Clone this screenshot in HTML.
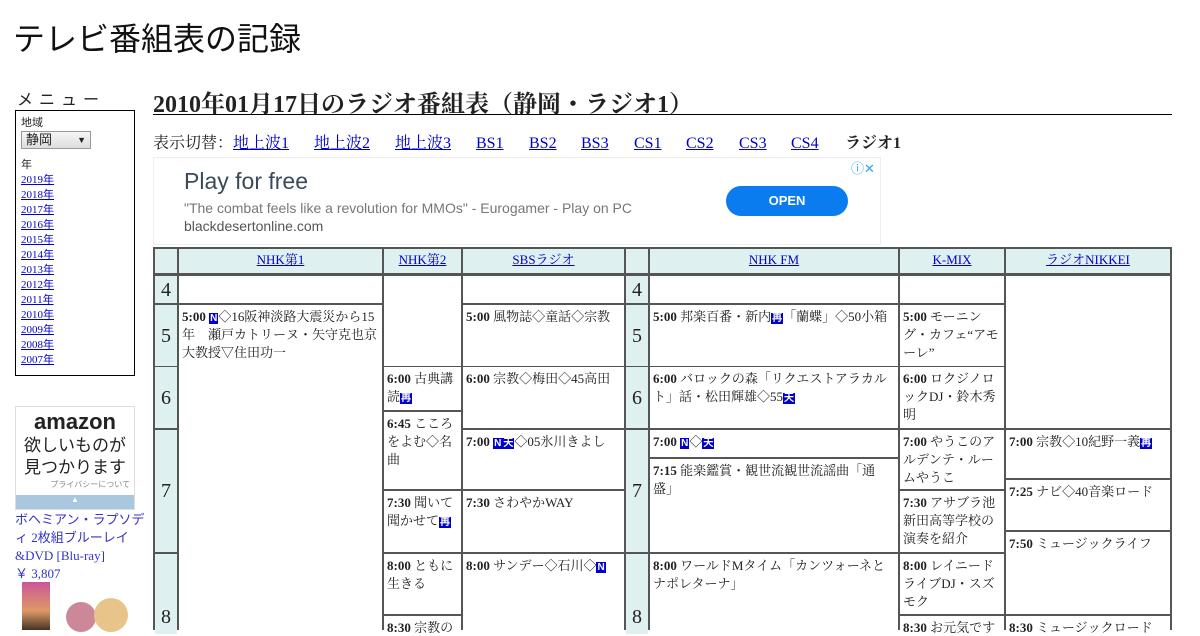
<!DOCTYPE html>
<html><head><meta charset="utf-8"><style>
*{margin:0;padding:0;box-sizing:border-box}
body{width:1200px;height:630px;overflow:hidden;background:#fff;font-family:"Liberation Serif","Noto Serif CJK SC",serif;color:#222;position:relative}
.a{position:absolute}
a{color:#00c;text-decoration:underline}
.c{position:absolute;background:#fff;font-size:13px;line-height:18px;padding:3px 3px;overflow:hidden}
.h{background:#dff0f0;text-align:center;font-size:13px;line-height:22px;padding:0}
.t{background:#dff0f0;font-size:20px;display:flex;align-items:center;justify-content:center;padding:0}
b{font-weight:bold}
.i{display:inline-block;background:#00c;color:#fff;font-size:10px;line-height:11px;padding:0 1px;font-family:"Liberation Sans",sans-serif;font-weight:bold}
.n{position:absolute;top:134px;font-size:16px;line-height:20px;height:20px;white-space:nowrap;display:block}
#tb{position:absolute;left:-1px;top:0;width:1200px;height:630px}
</style></head><body>
<div class="a" style="left:13px;top:14px;font-size:32px;font-family:'Liberation Sans','Noto Sans CJK JP',sans-serif;color:#111">テレビ番組表の記録</div>
<div class="a" style="left:17px;top:86px;font-size:16px;letter-spacing:6px;font-family:'Liberation Sans','Noto Sans CJK JP',sans-serif">メニュー</div>
<div class="a" style="left:15px;top:110px;width:120px;height:266px;border:1px solid #000;padding:5px;font-size:11px;line-height:15px;font-family:'Liberation Sans','Noto Sans CJK JP',sans-serif">
<div>地域</div>
<div style="width:70px;height:18px;border:1px solid #999;background:linear-gradient(#f6f6f6,#ddd);font-size:13px;line-height:16px;padding-left:4px;position:relative">静岡<span style="position:absolute;right:4px;font-size:9px">▼</span></div>
<div style="margin-top:9px">年</div>
<div style="font-family:'Liberation Serif',serif"><a>2019年</a><br><a>2018年</a><br><a>2017年</a><br><a>2016年</a><br><a>2015年</a><br><a>2014年</a><br><a>2013年</a><br><a>2012年</a><br><a>2011年</a><br><a>2010年</a><br><a>2009年</a><br><a>2008年</a><br><a>2007年</a></div>
</div>
<div class="a" style="left:15px;top:406px;width:120px;height:104px;border:1px solid #ddd;text-align:center;font-family:'Liberation Sans','Noto Sans CJK JP',sans-serif">
<div style="font-size:22px;font-weight:bold;line-height:22px;margin-top:4px">amazon</div>
<div style="font-size:17px;line-height:22px;margin-top:2px">欲しいものが<br>見つかります</div>
<div style="font-size:8px;text-align:right;color:#888;padding-right:4px">プライバシーについて</div>
<div style="position:absolute;left:0;right:0;bottom:0;height:14px;background:#a9c8df;color:#fff;font-size:8px">▲</div>
</div>
<div class="a" style="left:15px;top:511px;width:130px;white-space:nowrap;font-size:13px;line-height:18px;color:#33c;font-family:'Liberation Serif','Noto Sans CJK JP',serif">ボヘミアン・ラプソデ<br>ィ 2枚組ブルーレイ<br>&amp;DVD [Blu-ray]<br>￥ 3,807</div>
<div class="a" style="left:22px;top:582px;width:28px;height:48px;background:linear-gradient(#c59,#d96 60%,#432)"></div>
<div class="a" style="left:66px;top:602px;width:30px;height:30px;border-radius:50%;background:#c89"></div>
<div class="a" style="left:94px;top:598px;width:34px;height:34px;border-radius:50%;background:#e7c48a"></div>

<div class="a" style="left:153px;top:84px;width:1019px;height:31px;border-bottom:1px solid #000;font-size:24px;font-weight:bold">2010年01月17日のラジオ番組表（静岡・ラジオ1）</div>
<span class="n" style="left:153px">表示切替：</span>
<a class="n" style="left:233px">地上波1</a>
<a class="n" style="left:314px">地上波2</a>
<a class="n" style="left:395px">地上波3</a>
<a class="n" style="left:476px">BS1</a>
<a class="n" style="left:529px">BS2</a>
<a class="n" style="left:581px">BS3</a>
<a class="n" style="left:634px">CS1</a>
<a class="n" style="left:686px">CS2</a>
<a class="n" style="left:739px">CS3</a>
<a class="n" style="left:791px">CS4</a>
<b class="n" style="left:845px">ラジオ1</b>
<div class="a" style="left:153px;top:157px;width:728px;height:88px;border:1px solid #eee;font-family:'Liberation Sans',sans-serif">
<div class="a" style="left:30px;top:10px;font-size:23px;color:#3a4a5a">Play for free</div>
<div class="a" style="left:30px;top:42px;font-size:14px;color:#777">"The combat feels like a revolution for MMOs" - Eurogamer - Play on PC</div>
<div class="a" style="left:30px;top:60px;font-size:14px;color:#555">blackdesertonline.com</div>
<div class="a" style="left:572px;top:28px;width:122px;height:30px;border-radius:15px;background:#0a7cf0;color:#fff;font-size:13px;font-weight:bold;text-align:center;line-height:30px">OPEN</div>
<div class="a" style="left:697px;top:0;font-size:13px;color:#2aa8e0">ⓘ✕</div>
</div>

<div id="tb">
<div class="a" style="left:154px;top:247px;width:1019px;height:383px;background:#555"></div>
<div class="c h" style="left:156px;top:249px;width:22px;height:24px"></div>
<div class="c h" style="left:180px;top:249px;width:203px;height:24px"><a>NHK第1</a></div>
<div class="c h" style="left:385px;top:249px;width:77px;height:24px"><a>NHK第2</a></div>
<div class="c h" style="left:464px;top:249px;width:161px;height:24px"><a>SBSラジオ</a></div>
<div class="c h" style="left:627px;top:249px;width:22px;height:24px"></div>
<div class="c h" style="left:651px;top:249px;width:248px;height:24px"><a>NHK FM</a></div>
<div class="c h" style="left:901px;top:249px;width:104px;height:24px"><a>K-MIX</a></div>
<div class="c h" style="left:1007px;top:249px;width:164px;height:24px"><a>ラジオNIKKEI</a></div>

<div class="c t" style="left:156px;top:276px;width:22px;height:27px">4</div>
<div class="c t" style="left:156px;top:305px;width:22px;height:61px">5</div>
<div class="c t" style="left:156px;top:367px;width:22px;height:61px">6</div>
<div class="c t" style="left:156px;top:430px;width:22px;height:122px">7</div>
<div class="c t" style="left:156px;top:554px;width:22px;height:80px;align-items:flex-end;padding-bottom:8px">8</div>
<div class="c t" style="left:627px;top:276px;width:22px;height:27px">4</div>
<div class="c t" style="left:627px;top:305px;width:22px;height:61px">5</div>
<div class="c t" style="left:627px;top:367px;width:22px;height:61px">6</div>
<div class="c t" style="left:627px;top:430px;width:22px;height:122px">7</div>
<div class="c t" style="left:627px;top:554px;width:22px;height:80px;align-items:flex-end;padding-bottom:8px">8</div>

<div class="c" style="left:180px;top:276px;width:203px;height:27px"></div>
<div class="c" style="left:180px;top:305px;width:203px;height:330px"><b>5:00</b> <span class="i">N</span>◇16阪神淡路大震災から15年　瀬戸カトリーヌ・矢守克也京大教授▽住田功一</div>

<div class="c" style="left:385px;top:276px;width:77px;height:90px"></div>
<div class="c" style="left:385px;top:367px;width:77px;height:43px"><b>6:00</b> 古典講読<span class="i">再</span></div>
<div class="c" style="left:385px;top:412px;width:77px;height:77px"><b>6:45</b> こころをよむ◇名曲</div>
<div class="c" style="left:385px;top:491px;width:77px;height:61px"><b>7:30</b> 聞いて聞かせて<span class="i">再</span></div>
<div class="c" style="left:385px;top:554px;width:77px;height:60px"><b>8:00</b> ともに生きる</div>
<div class="c" style="left:385px;top:616px;width:77px;height:20px"><b>8:30</b> 宗教の</div>

<div class="c" style="left:464px;top:276px;width:161px;height:27px"></div>
<div class="c" style="left:464px;top:305px;width:161px;height:61px"><b>5:00</b> 風物誌◇童話◇宗教</div>
<div class="c" style="left:464px;top:367px;width:161px;height:61px"><b>6:00</b> 宗教◇梅田◇45高田</div>
<div class="c" style="left:464px;top:430px;width:161px;height:59px"><b>7:00</b> <span class="i">N</span><span class="i">天</span>◇05氷川きよし</div>
<div class="c" style="left:464px;top:491px;width:161px;height:61px"><b>7:30</b> さわやかWAY</div>
<div class="c" style="left:464px;top:554px;width:161px;height:80px"><b>8:00</b> サンデー◇石川◇<span class="i">N</span></div>

<div class="c" style="left:651px;top:276px;width:248px;height:27px"></div>
<div class="c" style="left:651px;top:305px;width:248px;height:61px"><b>5:00</b> 邦楽百番・新内<span class="i">再</span>「蘭蝶」◇50小箱</div>
<div class="c" style="left:651px;top:367px;width:248px;height:61px"><b>6:00</b> バロックの森「リクエストアラカルト」話・松田輝雄◇55<span class="i">天</span></div>
<div class="c" style="left:651px;top:430px;width:248px;height:27px"><b>7:00</b> <span class="i">N</span>◇<span class="i">天</span></div>
<div class="c" style="left:651px;top:459px;width:248px;height:93px;padding-right:20px"><b>7:15</b>&nbsp;能楽鑑賞・観世流観世流謡曲「通盛」</div>
<div class="c" style="left:651px;top:554px;width:248px;height:80px"><b>8:00</b> ワールドMタイム「カンツォーネとナポレターナ」</div>

<div class="c" style="left:901px;top:276px;width:104px;height:27px"></div>
<div class="c" style="left:901px;top:305px;width:104px;height:61px"><b>5:00</b> モーニング・カフェ“アモーレ”</div>
<div class="c" style="left:901px;top:367px;width:104px;height:61px"><b>6:00</b> ロクジノロックDJ・鈴木秀明</div>
<div class="c" style="left:901px;top:430px;width:104px;height:59px"><b>7:00</b> やうこのアルデンテ・ルームやうこ</div>
<div class="c" style="left:901px;top:491px;width:104px;height:61px"><b>7:30</b> アサブラ池新田高等学校の演奏を紹介</div>
<div class="c" style="left:901px;top:554px;width:104px;height:60px"><b>8:00</b> レイニードライブDJ・スズモク</div>
<div class="c" style="left:901px;top:616px;width:104px;height:20px"><b>8:30</b> お元気です</div>

<div class="c" style="left:1007px;top:276px;width:164px;height:152px"></div>
<div class="c" style="left:1007px;top:430px;width:164px;height:48px"><b>7:00</b> 宗教◇10紀野一義<span class="i">再</span></div>
<div class="c" style="left:1007px;top:480px;width:164px;height:50px"><b>7:25</b> ナビ◇40音楽ロード</div>
<div class="c" style="left:1007px;top:532px;width:164px;height:82px"><b>7:50</b> ミュージックライフ</div>
<div class="c" style="left:1007px;top:616px;width:164px;height:20px"><b>8:30</b> ミュージックロード</div>
</div>
</body></html>
